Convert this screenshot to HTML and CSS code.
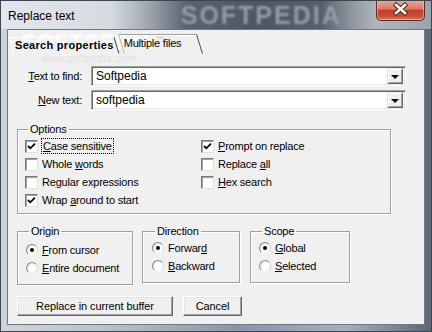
FILE: index.html
```html
<!DOCTYPE html>
<html lang="en">
<head>
    <meta charset="UTF-8">
    <title>Replace text</title>
    <link rel="stylesheet" href="styles.css">
</head>
<body>

    <div class="window">
        <div class="titlebar">
            <span class="title">Replace text</span>
            <span class="wm-title">SOFTPEDIA</span>
            <div class="close">
                <svg width="47" height="18" viewBox="0 0 47 18">
                    <path d="M19 5 L28 13 M28 5 L19 13" stroke="#4a2a24" stroke-width="4.5" stroke-linecap="square"/>
                    <path d="M19 5 L28 13 M28 5 L19 13" stroke="#ffffff" stroke-width="2.6" stroke-linecap="square"/>
                </svg>
            </div>
        </div>

        <div class="client">
            <!-- watermark behind the tabs -->
            <div class="wm-client">SOFTPEDIA<sup>™</sup></div>
            <div class="wm-url">www.softpedia.com</div>

            <div class="tabs">
                <div class="tab active"><span>Search properties</span></div>
                <div class="tab"><span>Multiple files</span></div>
            </div>

            <div class="page">
                <div class="field">
                    <label><u>T</u>ext to find:</label>
                    <div class="combo">
                        <span class="value">Softpedia</span>
                        <span class="drop"><i></i></span>
                    </div>
                </div>
                <div class="field">
                    <label><u>N</u>ew text:</label>
                    <div class="combo">
                        <span class="value">softpedia</span>
                        <span class="drop"><i></i></span>
                    </div>
                </div>

                <fieldset class="options">
                    <legend>Options</legend>
                    <div class="opt-grid">
                        <div class="opt"><span class="check on"></span><span class="focus"><u>C</u>ase sensitive</span></div>
                        <div class="opt"><span class="check"></span><span>Whole <u>w</u>ords</span></div>
                        <div class="opt"><span class="check"></span><span>Re<u>g</u>ular expressions</span></div>
                        <div class="opt"><span class="check on"></span><span>Wrap <u>a</u>round to start</span></div>
                        <div class="opt"><span class="check on"></span><span><u>P</u>rompt on replace</span></div>
                        <div class="opt"><span class="check"></span><span>Replace <u>a</u>ll</span></div>
                        <div class="opt"><span class="check"></span><span><u>H</u>ex search</span></div>
                    </div>
                </fieldset>

                <div class="lower">
                    <fieldset class="origin">
                        <legend>Origin</legend>
                        <div class="opt"><span class="radio on"></span><span><u>F</u>rom cursor</span></div>
                        <div class="opt"><span class="radio"></span><span><u>E</u>ntire document</span></div>
                    </fieldset>
                    <fieldset class="direction">
                        <legend>Direction</legend>
                        <div class="opt"><span class="radio on"></span><span>Forwar<u>d</u></span></div>
                        <div class="opt"><span class="radio"></span><span><u>B</u>ackward</span></div>
                    </fieldset>
                    <fieldset class="scope">
                        <legend>Scope</legend>
                        <div class="opt"><span class="radio on"></span><span><u>G</u>lobal</span></div>
                        <div class="opt"><span class="radio"></span><span><u>S</u>elected</span></div>
                    </fieldset>
                </div>

                <div class="buttons">
                    <button class="btn replace">Replace in current buffer</button>
                    <button class="btn cancel">Cancel</button>
                </div>
            </div>
        </div>
    </div>

</body>
</html>
```

FILE: styles.css
```css
* {
    box-sizing: border-box;
}
body {
    margin: 0;
    font-family: "Liberation Sans", Arial, sans-serif;
    font-size: 11px;
    letter-spacing: -0.2px;
    color: #000;
}
u {
    text-decoration-thickness: 1px;
    text-underline-offset: 1px;
}
.window {
    width: 432px;
    height: 332px;
    display: flex;
    flex-direction: column;
    border: 1px solid #3e4751;
    background: linear-gradient(90deg, #cdd3d9 0, #b9c2cb 25%, #8996a3 55%, #a5b1bd 80%, #5b6874 100%);
}
.titlebar {
    height: 28px;
    display: flex;
    align-items: flex-start;
    overflow: hidden;
    background: linear-gradient(90deg, #e3e7eb 0, #d6dbe0 110px, #9aa3ac 150px, #5a646f 185px, #4d5661 260px, #56606a 320px, #8d969f 350px, #aeb6be 375px, #9aa4ad 431px);
}
.title {
    margin: 8px 0 0 7px;
    font-size: 12px;
    line-height: 15px;
    letter-spacing: 0;
}
.wm-title {
    margin: 1px 0 0 106px;
    font-size: 25px;
    line-height: 26px;
    font-weight: bold;
    letter-spacing: 2px;
    color: #929ca6;
    filter: blur(1.2px);
}
.close {
    margin-left: auto;
    margin-right: 6px;
    margin-top: -1px;
    width: 49px;
    height: 21px;
    border: 1px solid #5a2b22;
    border-top: none;
    border-radius: 0 0 5px 5px;
    background: linear-gradient(#e9aa9c 0, #d87a68 45%, #c2402a 52%, #c84c30 80%, #de7c58 100%);
    box-shadow: inset 0 0 0 1px rgba(255, 210, 190, 0.5);
}
.close svg {
    display: block;
}
.client {
    flex: 1;
    position: relative;
    margin: 0 6px 6px 6px;
    border: 1px solid #6f7883;
    background: #f0f0f0;
}
.wm-client {
    position: absolute;
    left: 13px;
    top: -1px;
    font-size: 22px;
    font-weight: bold;
    letter-spacing: 1px;
    color: rgba(255, 255, 255, 0.8);
    pointer-events: none;
}
.wm-client sup {
    font-size: 7px;
    font-weight: normal;
    color: #c8c8c8;
}
.wm-url {
    position: absolute;
    left: 33px;
    top: 23px;
    font-size: 10px;
    letter-spacing: 0.5px;
    color: #e0e0e0;
    pointer-events: none;
}
.tabs {
    position: relative;
    display: flex;
    align-items: flex-end;
    height: 24px;
    padding-left: 3px;
}
.tab {
    height: 20px;
    width: 79px;
    margin-left: 4px;
    padding: 0 0 0 2px;
    line-height: 16px;
    border: 1px solid;
    border-color: #a0a0a0 #505050 transparent #b4b4b4;
    box-shadow: inset 1px 1px 0 #ffffff;
    transform: skewX(17deg);
}
.tab span {
    display: inline-block;
    transform: skewX(-17deg);
}
.tab.active {
    width: 106px;
    height: 17px;
    margin-left: 0;
    padding-left: 3px;
    line-height: 15px;
    font-weight: bold;
    letter-spacing: 0.3px;
    border-color: #ffffff #404040 transparent #ffffff;
    box-shadow: none;
    z-index: 1;
}
.page {
    position: relative;
    padding: 12px 0 0 9px;
}
.field {
    display: flex;
    align-items: center;
    height: 20px;
    margin-bottom: 4px;
}
.field label {
    width: 74px;
    padding-right: 9px;
    text-align: right;
}
.combo {
    width: 315px;
    height: 20px;
    display: flex;
    align-items: center;
    background: #fff;
    border: 1px solid;
    border-color: #a0a0a0 #ffffff #ffffff #a0a0a0;
    box-shadow: inset 1px 1px 0 #696969, inset -1px -1px 0 #e3e3e3;
    padding: 2px;
    font-size: 12px;
    letter-spacing: 0;
}
.combo .value {
    flex: 1;
    padding-left: 2px;
}
.drop {
    width: 16px;
    height: 16px;
    display: flex;
    align-items: center;
    justify-content: center;
    background: #f0f0f0;
    border: 1px solid;
    border-color: #e3e3e3 #696969 #696969 #e3e3e3;
    box-shadow: inset 1px 1px 0 #ffffff, inset -1px -1px 0 #a0a0a0;
}
.drop i {
    width: 0;
    height: 0;
    border-left: 4px solid transparent;
    border-right: 4px solid transparent;
    border-top: 4px solid #000;
    margin-top: 1px;
}
fieldset {
    margin: 0;
    padding: 0;
    min-width: 0;
    border: 1px solid #a0a0a0;
    box-shadow: 1px 1px 0 #ffffff, inset 1px 1px 0 #ffffff;
}
legend {
    padding: 0 2px;
    margin-left: 3px;
    line-height: 13px;
}
.options {
    width: 374px;
    margin-top: 13px;
    padding: 1px 0 4px 7px;
}
.opt-grid {
    display: grid;
    grid-template-columns: 176px 1fr;
    grid-template-rows: repeat(4, 18px);
    grid-auto-flow: column;
}
.opt {
    display: flex;
    align-items: center;
    height: 18px;
    gap: 4px;
}
.check {
    width: 13px;
    height: 13px;
    flex: none;
    background: #fff;
    border: 1px solid;
    border-color: #7a7a7a #e0e0e0 #e0e0e0 #7a7a7a;
    box-shadow: inset 1px 1px 0 #a0a0a0;
}
.check.on {
    background: #fff url("data:image/svg+xml,%3Csvg xmlns='http://www.w3.org/2000/svg' width='11' height='11'%3E%3Cpath d='M2 5 L4.3 7.3 L9 2.6' fill='none' stroke='%23000' stroke-width='1.8'/%3E%3C/svg%3E") no-repeat center;
}
.focus {
    outline: 1px dotted #000;
    outline-offset: 1px;
    margin-left: 1px;
}
.radio {
    width: 12px;
    height: 12px;
    flex: none;
    border-radius: 50%;
    background: radial-gradient(circle at 60% 60%, #ffffff 0, #ffffff 45%, #e4e4e4 70%);
    border: 1px solid;
    border-color: #8a8a8a #d8d8d8 #f4f4f4 #8a8a8a;
    display: flex;
    align-items: center;
    justify-content: center;
}
.radio.on::after {
    content: "";
    width: 4px;
    height: 4px;
    border-radius: 50%;
    background: #000;
}
.lower {
    display: flex;
    align-items: flex-start;
    margin-top: 11px;
}
.origin {
    width: 116px;
    padding: 3px 0 7px 8px;
}
.direction {
    width: 98px;
    margin-left: 9px;
    padding: 1px 0 7px 9px;
}
.scope {
    width: 100px;
    margin-left: 10px;
    padding: 1px 0 7px 8px;
}
.buttons {
    display: flex;
    gap: 10px;
    margin-top: 11px;
}
.btn {
    height: 20px;
    padding: 0;
    font-family: inherit;
    font-size: 11px;
    letter-spacing: -0.1px;
    color: #000;
    background: #f0f0f0;
    border: 1px solid;
    border-color: #ffffff #696969 #696969 #ffffff;
    box-shadow: inset -1px -1px 0 #a0a0a0, inset 1px 1px 0 #e3e3e3;
}
.replace {
    width: 156px;
}
.cancel {
    width: 59px;
}
```
